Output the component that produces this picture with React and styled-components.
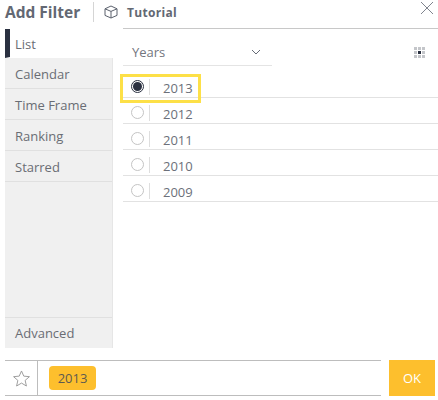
import React from 'react';
import styled, { createGlobalStyle } from 'styled-components';

const Global = createGlobalStyle`
  html, body { margin: 0; padding: 0; background: #fff; }
  body { font-family: "Open Sans", sans-serif; color: #5f6470; overflow: hidden; }
`;

const Panel = styled.div`
  width: 438px;
  height: 400px;
  display: flex;
  flex-direction: column;
  position: relative;
`;

const Header = styled.div`
  height: 28px;
  box-sizing: border-box;
  padding: 0 0 4px 5px;
  display: flex;
  align-items: center;
  position: relative;
`;

const Title = styled.div`
  font-size: 15.5px;
  font-weight: 700;
  color: #636873;
  width: 88px;
`;

const Divider = styled.div`
  width: 1px;
  height: 20px;
  background: #d5d5d5;
`;

const Tutorial = styled.div`
  display: flex;
  align-items: center;
  margin-left: 10px;
  gap: 9px;
  font-size: 12px;
  font-weight: 700;
  color: #636873;
  letter-spacing: 0.3px;
`;

const Close = styled.svg`
  position: absolute;
  right: 4px;
  top: 1px;
`;

const Body = styled.div`
  height: 320px;
  display: flex;
  padding-left: 5px;
`;

const Sidebar = styled.div`
  width: 108px;
  margin-top: 1px;
  display: flex;
  flex-direction: column;
  background: #f0f0f0;
  border-right: 1px solid #e6e6e6;
  box-sizing: border-box;
`;

const Tab = styled.div`
  height: ${p => (p.$active ? 29 : 31)}px;
  box-sizing: border-box;
  padding-left: ${p => (p.$active ? 5 : 10)}px;
  padding-top: ${p => (p.$active ? 2 : 1)}px;
  display: flex;
  align-items: center;
  font-size: 13px;
  color: #6a6d74;
  border-bottom: 1px solid ${p => (p.$active ? 'transparent' : '#e0e0e0')};
  background: ${p => (p.$active ? '#fff' : 'transparent')};
  border-left: ${p => (p.$active ? '5px solid #2a3040' : 'none')};
  margin-right: ${p => (p.$active ? '-1px' : '0')};
  ${p => p.$bottom && 'margin-top: auto; border-top: 1px solid #e0e0e0; border-bottom: none; padding-top: 0;'}
`;

const Content = styled.div`
  flex: 1;
  margin-left: 10px;
  border-top: 1px solid #c8c8c8;
  position: relative;
`;

const ToolRow = styled.div`
  display: flex;
  justify-content: space-between;
  align-items: center;
`;

const Select = styled.div`
  width: 149px;
  height: 37px;
  box-sizing: border-box;
  border-bottom: 1px solid #e4e4e4;
  display: flex;
  align-items: center;
  justify-content: space-between;
  padding: 9px 11px 0 9px;
  font-size: 13px;
  color: #73767e;
`;

const Grip = styled.svg`
  margin-right: 13px;
  margin-top: 9px;
`;

const List = styled.div`
  margin-top: 6px;
`;

const Row = styled.div`
  height: 26px;
  box-sizing: border-box;
  border-bottom: 1px solid #e2e2e2;
  display: flex;
  align-items: center;
  position: relative;
`;

const Radio = styled.div`
  width: 13px;
  height: 13px;
  margin-left: 8px;
  margin-top: 4px;
  border-radius: 50%;
  box-sizing: border-box;
  border: 1px solid ${p => (p.$on ? '#2a3040' : '#c4c4c4')};
  display: flex;
  align-items: center;
  justify-content: center;
  &::after {
    content: '';
    display: ${p => (p.$on ? 'block' : 'none')};
    width: 9px;
    height: 9px;
    border-radius: 50%;
    background: #2a3040;
  }
`;

const RowSep = styled.div`
  width: 1px;
  height: 16px;
  background: #dedede;
  margin-left: 5px;
  margin-top: 4px;
`;

const Year = styled.div`
  margin-left: 13px;
  font-size: 13px;
  color: #6c707a;
  padding-top: 7px;
`;

const Highlight = styled.div`
  position: absolute;
  left: -3px;
  top: 45px;
  width: 81px;
  height: 29px;
  box-sizing: border-box;
  border: 3px solid #fde047;
  pointer-events: none;
`;

const Footer = styled.div`
  margin-top: 12px;
  padding-left: 5px;
  height: 36px;
  display: flex;
`;

const Bar = styled.div`
  width: 376px;
  box-sizing: border-box;
  border-top: 1px solid #bdbdbd;
  border-bottom: 1px solid #bdbdbd;
  display: flex;
  align-items: center;
`;

const StarBox = styled.div`
  width: 33px;
  height: 100%;
  box-sizing: border-box;
  border-right: 1px solid #bdbdbd;
  display: flex;
  align-items: center;
  justify-content: center;
`;

const Chip = styled.div`
  margin-left: 11px;
  width: 47px;
  height: 24px;
  border-radius: 4px;
  background: #fdbf2d;
  color: #5d5a50;
  font-size: 13px;
  display: flex;
  align-items: center;
  justify-content: center;
`;

const OkButton = styled.button`
  margin-left: 8px;
  width: 46px;
  height: 36px;
  border: none;
  padding: 0;
  background: #fdbf2d;
  color: #fff;
  font-family: inherit;
  font-size: 13px;
  font-weight: 500;
`;

const years = ['2013', '2012', '2011', '2010', '2009'];

export default function App() {
  return (
    <Panel>
      <Global />
      <Header>
        <Title>Add Filter</Title>
        <Divider />
        <Tutorial>
          <svg width="14" height="14" viewBox="0 0 14 14" fill="none" stroke="#5b616d" strokeWidth="1">
            <path d="M7 1 L13 3.8 V10.4 L7 13 L1 10.4 V3.8 Z" />
            <path d="M1 3.8 L7 6.4 L13 3.8 M7 6.4 V13" />
          </svg>
          Tutorial
        </Tutorial>
        <Close width="14" height="14" viewBox="0 0 14 14" stroke="#80848e" strokeWidth="1">
          <path d="M1 1 L13 13 M13 1 L1 13" />
        </Close>
      </Header>
      <Body>
        <Sidebar>
          <Tab $active>List</Tab>
          <Tab>Calendar</Tab>
          <Tab>Time Frame</Tab>
          <Tab>Ranking</Tab>
          <Tab>Starred</Tab>
          <Tab $bottom>Advanced</Tab>
        </Sidebar>
        <Content>
          <ToolRow>
            <Select>
              Years
              <svg width="10" height="6" viewBox="0 0 10 6" fill="none" stroke="#666b76" strokeWidth="1">
                <path d="M1 1 L5 5 L9 1" />
              </svg>
            </Select>
            <Grip width="11" height="11" viewBox="0 0 11 11">
              {[0, 4, 8].flatMap(y =>
                [0, 4, 8].map(x => (
                  <rect
                    key={`${x}-${y}`}
                    x={x}
                    y={y}
                    width="3"
                    height="3"
                    fill={x === 4 && y === 4 ? '#2a3040' : '#c4c6ca'}
                  />
                ))
              )}
            </Grip>
          </ToolRow>
          <List>
            {years.map((y, i) => (
              <Row key={y}>
                <Radio $on={i === 0} />
                <RowSep />
                <Year>{y}</Year>
              </Row>
            ))}
          </List>
          <Highlight />
        </Content>
      </Body>
      <Footer>
        <Bar>
          <StarBox>
            <svg width="19" height="19" viewBox="0 0 24 24" fill="none" stroke="#9a9a9a" strokeWidth="1.2">
              <path d="M12 2.5 L14.9 9 L22 9.7 L16.6 14.4 L18.2 21.5 L12 17.8 L5.8 21.5 L7.4 14.4 L2 9.7 L9.1 9 Z" />
            </svg>
          </StarBox>
          <Chip>2013</Chip>
        </Bar>
        <OkButton>OK</OkButton>
      </Footer>
    </Panel>
  );
}
